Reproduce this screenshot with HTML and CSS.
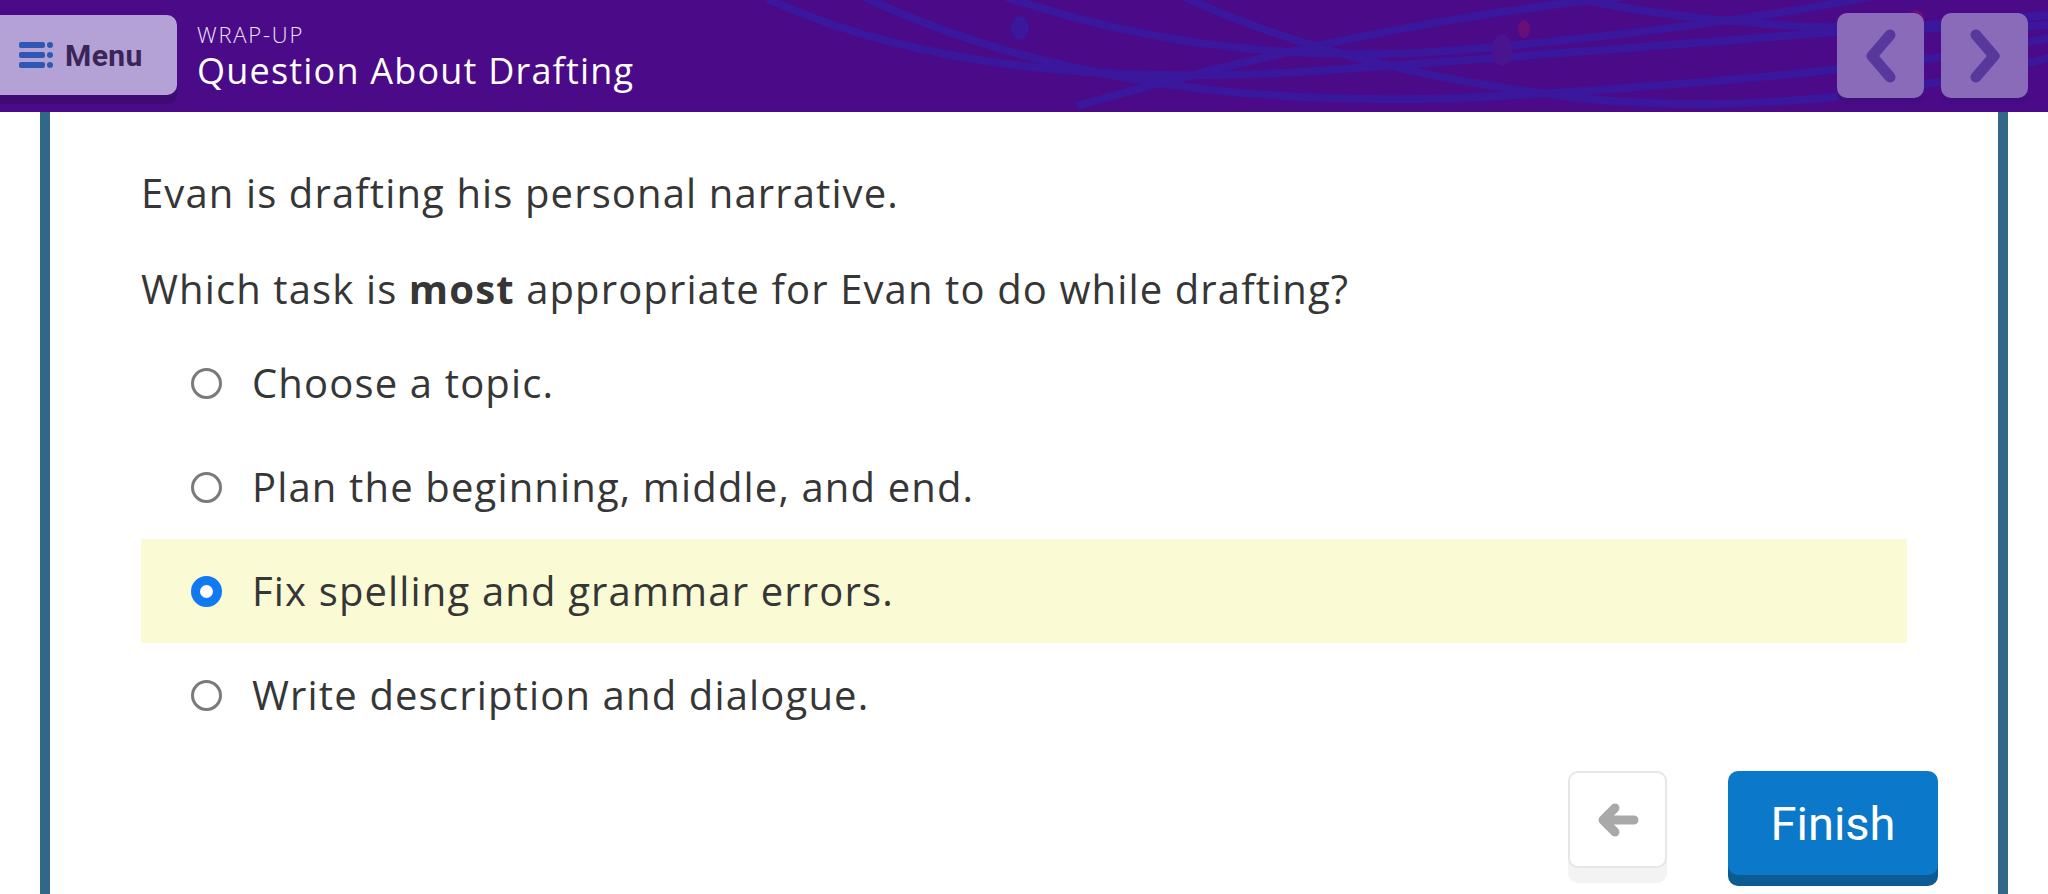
FILE: index.html
```html
<!DOCTYPE html>
<html lang="en">
<head>
<meta charset="utf-8">
<title>Question About Drafting</title>
<link rel="stylesheet" href="styles.css">
</head>
<body>
<header class="topbar">
  <svg class="topbar-art" width="2048" height="112" viewBox="0 0 2048 112" aria-hidden="true">
    <g fill="none" stroke="#3a179c" stroke-width="8" stroke-linecap="round">
      <path d="M770 0 Q 980 95 1330 70 T 2048 15"/>
      <path d="M860 -5 Q 1120 120 1520 95 T 2060 35"/>
      <path d="M1000 -5 Q 1220 70 1460 50 Q 1700 30 1880 -5"/>
      <path d="M1080 105 Q 1380 20 1640 -5"/>
      <path d="M1180 -5 Q 1350 75 1600 100 Q 1820 118 2060 55"/>
      <path d="M1560 -5 Q 1760 40 2050 25"/>
    </g>
    <ellipse cx="1020" cy="28" rx="9" ry="12" fill="#3a179c"/>
    <ellipse cx="1502" cy="50" rx="10" ry="16" fill="#4a1490"/>
    <ellipse cx="1524" cy="29" rx="6" ry="9" fill="#6a0f7a"/>
    <ellipse cx="1916" cy="22" rx="9" ry="12" fill="#6a0f7a"/>
  </svg>
  <button class="menu-btn" type="button">
    <svg class="menu-icon" width="34" height="26" viewBox="0 0 34 26" aria-hidden="true">
      <rect x="0" y="0" width="26" height="6" rx="2" fill="#2f58b4"/>
      <rect x="0" y="10" width="26" height="6" rx="2" fill="#2f58b4"/>
      <rect x="0" y="20" width="26" height="6" rx="2" fill="#2f58b4"/>
      <circle cx="31" cy="3" r="3" fill="#2f58b4"/>
      <circle cx="31" cy="13" r="3" fill="#2f58b4"/>
      <circle cx="31" cy="23" r="3" fill="#2f58b4"/>
    </svg>
    <span class="menu-label">Menu</span>
  </button>
  <div class="titles">
    <div class="kicker">WRAP-UP</div>
    <div class="title">Question About Drafting</div>
  </div>
  <nav class="pager">
    <button class="pager-btn" type="button" aria-label="Previous">
      <svg width="40" height="56" viewBox="0 0 40 56" aria-hidden="true"><polyline points="29,7 11,28 29,49" fill="none" stroke="#58389a" stroke-width="11" stroke-linecap="round" stroke-linejoin="round"/></svg>
    </button>
    <button class="pager-btn" type="button" aria-label="Next">
      <svg width="40" height="56" viewBox="0 0 40 56" aria-hidden="true"><polyline points="11,7 29,28 11,49" fill="none" stroke="#58389a" stroke-width="11" stroke-linecap="round" stroke-linejoin="round"/></svg>
    </button>
  </nav>
</header>

<main class="card">
  <div class="question">
    <p class="prompt">Evan is drafting his personal narrative.</p>
    <p class="prompt prompt-second">Which task is <b>most</b> appropriate for Evan to do while drafting?</p>
    <ul class="options">
      <li class="option"><span class="radio"></span><span class="option-text">Choose a topic.</span></li>
      <li class="option"><span class="radio"></span><span class="option-text">Plan the beginning, middle, and end.</span></li>
      <li class="option option-selected"><span class="radio radio-on"></span><span class="option-text">Fix spelling and grammar errors.</span></li>
      <li class="option"><span class="radio"></span><span class="option-text">Write description and dialogue.</span></li>
    </ul>
  </div>
  <div class="actions">
    <button class="back-btn" type="button" aria-label="Back">
      <svg width="42" height="34" viewBox="0 0 42 34" aria-hidden="true">
        <path d="M18 5 L6 17 L18 29 M7 17 L37 17" fill="none" stroke="#a9a9a9" stroke-width="9" stroke-linecap="round" stroke-linejoin="round"/>
      </svg>
    </button>
    <button class="finish-btn" type="button">Finish</button>
  </div>
</main>
</body>
</html>
```

FILE: styles.css
```css
* { box-sizing: border-box; }

html, body {
  margin: 0;
  padding: 0;
}

body {
  width: 2048px;
  height: 894px;
  overflow: hidden;
  background: #ffffff;
  font-family: "Open Sans", "Noto Sans", sans-serif;
  color: #363636;
}

button {
  font: inherit;
  border: 0;
  padding: 0;
  cursor: pointer;
}

.topbar {
  position: relative;
  height: 112px;
  background: #4b0a88;
  display: flex;
  align-items: flex-start;
  overflow: hidden;
}

.topbar-art {
  position: absolute;
  left: 0;
  top: 0;
}

.menu-btn {
  position: relative;
  margin-top: 15px;
  width: 177px;
  height: 80px;
  background: #b4a1d6;
  border-radius: 0 10px 10px 0;
  box-shadow: 0 9px 0 #3d0b72;
  display: flex;
  align-items: center;
  padding-left: 19px;
  gap: 12px;
}

.menu-label {
  font-family: Roboto, "Liberation Sans", sans-serif;
  font-weight: 700;
  font-size: 30px;
  color: #3a2458;
  letter-spacing: 0.4px;
}

.titles {
  position: relative;
  margin-left: 20px;
  padding-top: 20px;
  color: #ffffff;
}

.kicker {
  font-size: 22px;
  font-weight: 300;
  line-height: 28px;
  letter-spacing: 1.8px;
  color: #ece4f6;
}

.title {
  font-size: 36px;
  line-height: 46px;
  font-weight: 500;
  letter-spacing: 1.2px;
}

.pager {
  position: relative;
  margin-left: auto;
  margin-top: 13px;
  margin-right: 20px;
  display: flex;
  gap: 17px;
}

.pager-btn {
  width: 87px;
  height: 85px;
  border-radius: 10px;
  background: #8a6bb9;
  box-shadow: 0 6px 0 #430c80;
  display: flex;
  align-items: center;
  justify-content: center;
}

.card {
  height: 782px;
  margin: 0 40px;
  border-left: 10px solid #33678a;
  border-right: 10px solid #33678a;
  background: #ffffff;
}

.question {
  padding: 53px 91px 0;
}

.prompt {
  margin: 0;
  font-size: 40px;
  line-height: 56px;
  letter-spacing: 1.12px;
}

.prompt b {
  font-weight: 700;
}

.prompt-second {
  margin-top: 40px;
}

.options {
  list-style: none;
  margin: 14px 0 0;
  padding: 0;
}

.option {
  height: 104px;
  display: flex;
  align-items: center;
  padding-left: 50px;
  gap: 30px;
}

.option-selected {
  background: #fafbd4;
}

.radio {
  width: 31px;
  height: 31px;
  border-radius: 50%;
  border: 3px solid #7a7a7a;
  background: #ffffff;
  flex: none;
}

.radio-on {
  border: 9px solid #0f7af2;
}

.option-text {
  font-size: 40px;
  letter-spacing: 1.15px;
  line-height: 56px;
}

.actions {
  margin-top: 24px;
  display: flex;
  justify-content: flex-end;
  align-items: flex-start;
  gap: 61px;
  padding-right: 60px;
}

.back-btn {
  width: 99px;
  height: 97px;
  background: #ffffff;
  border: 2px solid #e6e6e6;
  border-radius: 10px;
  box-shadow: 0 15px 0 #f3f3f3;
  display: flex;
  align-items: center;
  justify-content: center;
}

.finish-btn {
  width: 210px;
  height: 104px;
  border-radius: 10px;
  background: #0b78c9;
  box-shadow: 0 11px 0 #0c5b92;
  color: #ffffff;
  font-family: Roboto, "Liberation Sans", sans-serif;
  font-size: 47px;
  font-weight: 400;
}
```
